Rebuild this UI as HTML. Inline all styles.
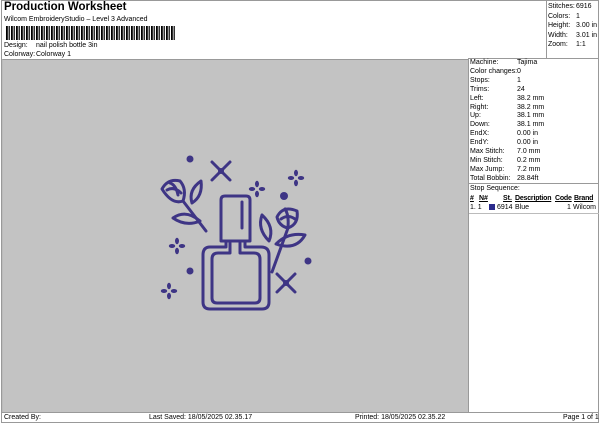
<!DOCTYPE html>
<html><head><meta charset="utf-8"><style>
*{margin:0;padding:0;box-sizing:border-box}
body{width:600px;height:424px;background:#fff;font-family:"Liberation Sans",sans-serif;font-size:7px;color:#000;position:relative;overflow:hidden}
.a{position:absolute;white-space:nowrap}
#frame{position:absolute;left:1px;top:0;width:598px;height:423px;border:1px solid #999}
#gray{position:absolute;left:2px;top:59px;width:466px;height:353px;background:#c3c3c3;border-top:1px solid #999;border-left:1px solid #bbb}
#right{position:absolute;left:468px;top:58px;width:131px;height:354px;border-left:1px solid #999;border-top:1px solid #999}
#stat{position:absolute;left:546px;top:0;width:53px;height:58px;border-left:1px solid #999}
#foot{position:absolute;left:1px;top:412px;width:598px;height:11px;border-top:1px solid #999}
</style></head><body>
<div id="frame"></div>
<div class="a" style="left:4px;top:1px;font-size:11.5px;font-weight:bold">Production Worksheet</div>
<div class="a" style="left:4px;top:16px">Wilcom EmbroideryStudio – Level 3 Advanced</div>
<svg class="a" style="left:6px;top:26px" width="170" height="14">
<defs><pattern id="bc" width="5" height="14" patternUnits="userSpaceOnUse"><rect x="0" width="1.8" height="14" fill="#000"/><rect x="2.6" width="1.2" height="14" fill="#000"/></pattern></defs>
<rect x="0" y="0" width="170" height="14" fill="url(#bc)"/>
</svg>
<div class="a" style="left:4px;top:42px">Design:</div><div class="a" style="left:36px;top:42px">nail polish bottle 3in</div>
<div class="a" style="left:4px;top:51px">Colorway:</div><div class="a" style="left:36px;top:51px">Colorway 1</div>
<div id="stat"></div>
<div class="a" style="left:548px;top:2px;line-height:9.6px">Stitches:<br>Colors:<br>Height:<br>Width:<br>Zoom:</div>
<div class="a" style="left:576px;top:2px;line-height:9.6px">6916<br>1<br>3.00 in<br>3.01 in<br>1:1</div>
<div id="gray"></div>
<div id="right"></div>
<div class="a" style="left:470px;top:59px;line-height:8.9px">Machine:<br>Color changes:<br>Stops:<br>Trims:<br>Left:<br>Right:<br>Up:<br>Down:<br>EndX:<br>EndY:<br>Max Stitch:<br>Min Stitch:<br>Max Jump:<br>Total Bobbin:</div>
<div class="a" style="left:517px;top:59px;line-height:8.9px">Tajima<br>0<br>1<br>24<br>38.2 mm<br>38.2 mm<br>38.1 mm<br>38.1 mm<br>0.00 in<br>0.00 in<br>7.0 mm<br>0.2 mm<br>7.2 mm<br>28.84ft</div>
<div class="a" style="left:469px;top:183px;width:130px;border-top:1px solid #999"></div>
<div class="a" style="left:470px;top:185px">Stop Sequence:</div>
<div class="a" style="left:470px;top:195px;font-weight:bold;text-decoration:underline">#</div>
<div class="a" style="left:479px;top:195px;font-weight:bold;text-decoration:underline">N#</div>
<div class="a" style="left:503px;top:195px;font-weight:bold;text-decoration:underline">St.</div>
<div class="a" style="left:515px;top:195px;font-weight:bold;text-decoration:underline;letter-spacing:-0.2px">Description</div>
<div class="a" style="left:555px;top:195px;font-weight:bold;text-decoration:underline;letter-spacing:-0.2px">Code</div>
<div class="a" style="left:574px;top:195px;font-weight:bold;text-decoration:underline;letter-spacing:-0.2px">Brand</div>
<div class="a" style="left:470px;top:204px">1. 1</div>
<div class="a" style="left:489px;top:204px;width:6px;height:6px;background:#2a2a8c"></div>
<div class="a" style="left:497px;top:204px">6914</div>
<div class="a" style="left:515px;top:204px">Blue</div>
<div class="a" style="left:567px;top:204px">1</div>
<div class="a" style="left:573px;top:204px">Wilcom</div>
<div class="a" style="left:469px;top:213px;width:130px;border-top:1px solid #bbb"></div>
<svg class="a" style="left:150px;top:145px" width="170" height="170" viewBox="0 0 170 170">
<defs><g id="d"><ellipse cx="0" cy="-5" rx="2" ry="3.2"/><ellipse cx="0" cy="5" rx="2" ry="3.2"/><ellipse cx="-5" cy="0" rx="3.2" ry="2"/><ellipse cx="5" cy="0" rx="3.2" ry="2"/></g></defs>
<g fill="none" stroke="#3e3585" stroke-width="3" stroke-linejoin="round" stroke-linecap="round">
<path d="M71 55 Q71 51 75 51 L96 51 Q100 51 100 55 L100 96 L71 96 Z"/>
<path d="M92 57 L92 83"/>
<path d="M76 96 L76 102 L60 102 Q53 102 53 110 L53 157 Q53 164 60 164 L112 164 Q119 164 119 157 L119 110 Q119 102 111 102 L95 102 L95 96"/>
<path d="M80 98 L80 108 L68 108 Q62 108 62 114 L62 153 Q62 158 67 158 L105 158 Q110 158 110 153 L110 114 Q110 108 104 108 L90 108 L90 98"/>
<path d="M12 44 Q18 33 30 36 Q37 44 33 56 Q22 60 12 44 Z"/>
<path d="M17 45 Q24 41 31 48 M20 38 Q26 40 28 50"/>
<path d="M51 36 Q38 45 42 58 Q53 51 51 36 Z"/>
<path d="M33 56 L56 86"/>
<path d="M23 73 Q36 64 50 76 Q36 82 23 73 Z"/>
<path d="M127 72 Q133 60 147 66 Q149 79 138 83 Q129 81 127 72 Z"/>
<path d="M131 74 Q138 69 145 74 M135 64 Q139 70 138 82"/>
<path d="M112 70 Q107 84 119 96 Q125 82 112 70 Z"/>
<path d="M138 83 L122 127"/>
<path d="M126 99 Q138 87 155 90 Q146 106 126 99 Z"/>
<path d="M62 17 L80 35 M80 17 L62 35"/>
<path d="M127 129 L145 147 M145 129 L127 147"/>
</g>
<g fill="#3e3585">
<circle cx="40" cy="14" r="3.5"/><circle cx="134" cy="51" r="4"/><circle cx="40" cy="126" r="3.5"/><circle cx="158" cy="116" r="3.5"/>
<circle cx="71" cy="26" r="3"/><circle cx="136" cy="138" r="3"/>
<use href="#d" x="107" y="44"/><use href="#d" x="146" y="33"/><use href="#d" x="27" y="101"/><use href="#d" x="19" y="146"/>
</g>
</svg>
<div id="foot"></div>
<div class="a" style="left:4px;top:414px">Created By:</div>
<div class="a" style="left:149px;top:414px">Last Saved: 18/05/2025 02.35.17</div>
<div class="a" style="left:355px;top:414px">Printed: 18/05/2025 02.35.22</div>
<div class="a" style="left:563px;top:414px">Page 1 of 1</div>
</body></html>
